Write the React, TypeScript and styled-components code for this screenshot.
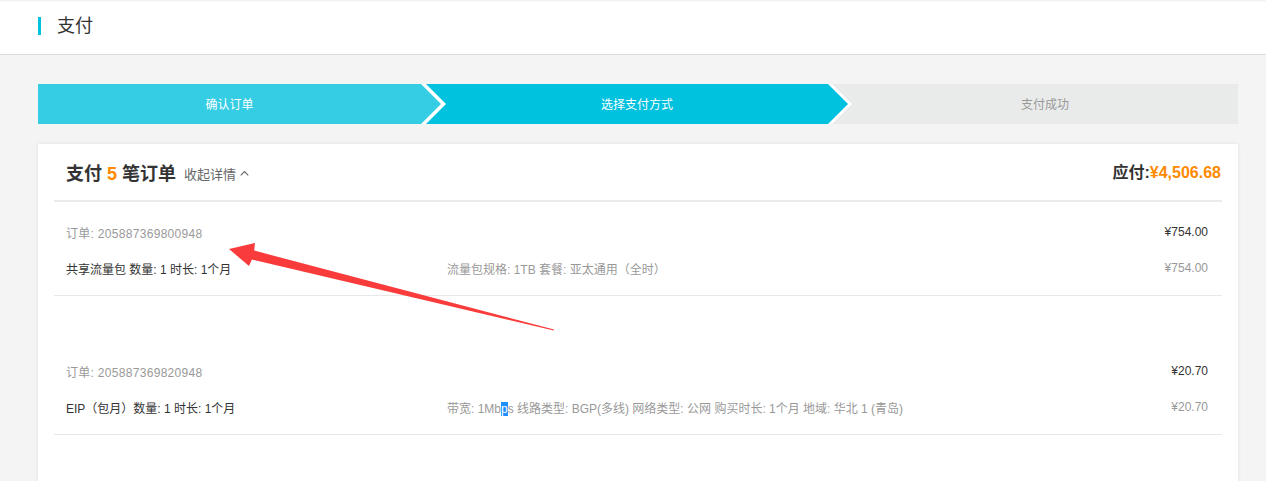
import React from 'react';
import styled, { createGlobalStyle } from 'styled-components';

const GlobalStyle = createGlobalStyle`
  html, body { margin: 0; padding: 0; background: #f4f4f4; }
  body {
    font-family: "Liberation Sans", Arial, "Noto Sans CJK SC", sans-serif;
    color: #333;
  }
  * { box-sizing: border-box; }
`;

const Shell = styled.div`
  position: relative;
  min-height: 481px;
  overflow: hidden;
`;

const Header = styled.header`
  height: 55px;
  background: #fff;
  border-bottom: 1px solid #dcdcdc;
  box-shadow: inset 0 2px 2px -1px rgba(0, 0, 0, 0.07);
  display: flex;
  align-items: center;
  gap: 16px;
  padding: 0 0 3px 38px;
`;

const TitleMark = styled.span`
  width: 3px;
  height: 18px;
  background: #00c1de;
  margin-top: 1px;
`;

const PageTitle = styled.h1`
  margin: 0;
  font-size: 18px;
  font-weight: normal;
  color: #333;
  line-height: 1;
`;

const Main = styled.main`
  padding: 29px 0 0 38px;
`;

const Content = styled.div`
  width: 1200px;
  display: flex;
  flex-direction: column;
  gap: 20px;
`;

const StepBar = styled.ol`
  list-style: none;
  margin: 0;
  padding: 0;
  height: 40px;
  display: flex;
  background: #fff;
`;

type StepKind = 'first' | 'middle' | 'last';

const clips: Record<StepKind, string> = {
  first: 'polygon(0 0, calc(100% - 20px) 0, 100% 50%, calc(100% - 20px) 100%, 0 100%)',
  middle:
    'polygon(0 0, calc(100% - 20px) 0, 100% 50%, calc(100% - 20px) 100%, 0 100%, 20px 50%)',
  last: 'polygon(0 0, 100% 0, 100% 100%, 0 100%, 20px 50%)',
};

const Step = styled.li<{ $kind: StepKind; $bg: string; $fg: string; $width?: number; $shift: number }>`
  ${(p) => (p.$width ? `width: ${p.$width}px; flex: none;` : 'flex: 1;')}
  margin-left: ${(p) => p.$shift}px;
  height: 40px;
  background: ${(p) => p.$bg};
  color: ${(p) => p.$fg};
  clip-path: ${(p) => clips[p.$kind]};
  display: flex;
  align-items: center;
  justify-content: center;
  font-size: 12px;
  padding-bottom: 2px;
  padding-left: ${(p) => (p.$kind === 'last' ? 20 : 0)}px;
  padding-right: ${(p) => (p.$kind === 'first' ? 20 : 0)}px;
`;

const Card = styled.section`
  background: #fff;
  box-shadow: 0 0 4px rgba(0, 0, 0, 0.08);
  padding: 0 16px 60px;
`;

const CardHead = styled.div`
  height: 58px;
  display: flex;
  align-items: center;
  justify-content: space-between;
  padding: 0 1px 0 12px;
  border-bottom: 2px solid #ebebeb;
`;

const HeadLeft = styled.div`
  display: flex;
  align-items: center;
`;

const HeadTitle = styled.h2`
  margin: 0;
  font-size: 18px;
  font-weight: bold;
  color: #333;
`;

const Accent = styled.span`
  color: #ff8a00;
`;

const Toggle = styled.button`
  margin-left: 8px;
  padding: 0;
  border: 0;
  background: none;
  font: inherit;
  font-size: 13px;
  color: #666;
  display: flex;
  align-items: center;
  gap: 4px;
  cursor: pointer;
  margin-top: 2px;
`;

const Payable = styled.div`
  font-size: 16px;
  font-weight: bold;
  color: #333;
  margin-top: -3px;
`;

const OrderGroup = styled.div<{ $offset: number }>`
  margin-top: ${(p) => p.$offset}px;
  padding: 12px 14px 9px 12px;
  border-bottom: 1px solid #e8e8e8;
`;

const OrderRow = styled.div`
  display: grid;
  grid-template-columns: 381px 1fr auto;
  align-items: center;
  height: 36px;
  font-size: 12px;
`;

const Cell = styled.span<{ $tone: 'dark' | 'muted'; $spaced?: boolean }>`
  color: ${(p) => (p.$tone === 'dark' ? '#333' : '#999')};
  white-space: nowrap;
  letter-spacing: ${(p) => (p.$spaced ? '0.3px' : 'normal')};
`;

const Selected = styled.span`
  background: #1e90ff;
  color: #fff;
`;

const Annotation = styled.svg`
  position: absolute;
  left: 0;
  top: 0;
  pointer-events: none;
`;

const Chevron = () => (
  <svg width="9" height="6" viewBox="0 0 9 6">
    <polyline points="0.7,5.3 4.5,1.5 8.3,5.3" fill="none" stroke="#666" strokeWidth="1.1" />
  </svg>
);

export default function App() {
  return (
    <Shell>
      <GlobalStyle />
      <Header>
        <TitleMark />
        <PageTitle>支付</PageTitle>
      </Header>
      <Main>
        <Content>
          <StepBar>
            <Step $kind="first" $bg="#35cde4" $fg="#fff" $width={403} $shift={0}>
              确认订单
            </Step>
            <Step $kind="middle" $bg="#00c1de" $fg="#fff" $width={422} $shift={-15}>
              选择支付方式
            </Step>
            <Step $kind="last" $bg="#e9ebea" $fg="#999" $shift={-16}>
              支付成功
            </Step>
          </StepBar>
          <Card>
            <CardHead>
              <HeadLeft>
                <HeadTitle>
                  支付 <Accent>5</Accent> 笔订单
                </HeadTitle>
                <Toggle>
                  收起详情 <Chevron />
                </Toggle>
              </HeadLeft>
              <Payable>
                应付:<Accent>¥4,506.68</Accent>
              </Payable>
            </CardHead>
            <OrderGroup $offset={0}>
              <OrderRow>
                <Cell $tone="muted" $spaced>订单: 205887369800948</Cell>
                <span />
                <Cell $tone="dark">¥754.00</Cell>
              </OrderRow>
              <OrderRow>
                <Cell $tone="dark">共享流量包 数量: 1 时长: 1个月</Cell>
                <Cell $tone="muted">流量包规格: 1TB 套餐: 亚太通用（全时）</Cell>
                <Cell $tone="muted">¥754.00</Cell>
              </OrderRow>
            </OrderGroup>
            <OrderGroup $offset={45}>
              <OrderRow>
                <Cell $tone="muted" $spaced>订单: 205887369820948</Cell>
                <span />
                <Cell $tone="dark">¥20.70</Cell>
              </OrderRow>
              <OrderRow>
                <Cell $tone="dark">EIP（包月）数量: 1 时长: 1个月</Cell>
                <Cell $tone="muted">
                  带宽: 1Mb<Selected>p</Selected>s 线路类型: BGP(多线) 网络类型: 公网 购买时长: 1个月 地域: 华北 1 (青岛)
                </Cell>
                <Cell $tone="muted">¥20.70</Cell>
              </OrderRow>
            </OrderGroup>
          </Card>
        </Content>
      </Main>
      <Annotation width="1266" height="481" viewBox="0 0 1266 481">
        <polygon
          points="229,249 255,243 254.2,250.6 554,329.6 553.8,330.4 251.9,259.6 249,266"
          fill="#f93b3b"
        />
      </Annotation>
    </Shell>
  );
}
